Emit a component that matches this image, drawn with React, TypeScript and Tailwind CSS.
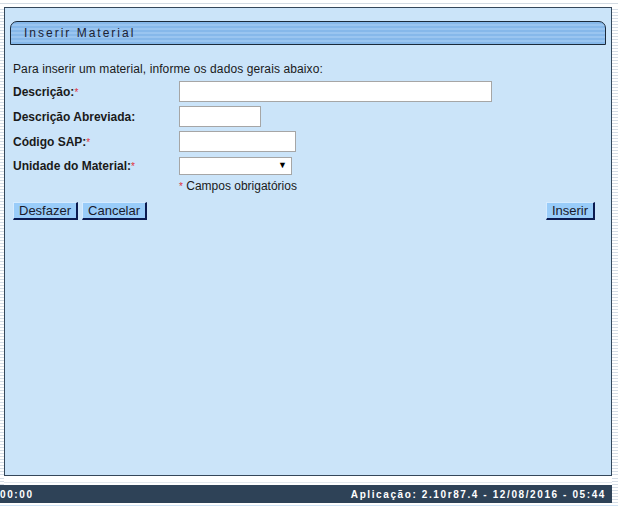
import React from 'react';

const stripes =
  'bg-[repeating-linear-gradient(180deg,#ffffff_0px,#ffffff_2px,#d5dde6_2px,#d5dde6_3px)]';

function Field({ label, required, children }: { label: string; required?: boolean; children: React.ReactNode }) {
  return (
    <div className="flex items-center">
      <div className="w-[166px] text-[12px] font-bold text-[#1a1a1a]">
        {label}
        {required && <span className="text-[10px] font-normal text-[#e0303a]">*</span>}
      </div>
      {children}
    </div>
  );
}

function Btn({ children }: { children: React.ReactNode }) {
  return (
    <button className="h-[18px] border border-t-[#d6ebff] border-l-[#d6ebff] border-r-2 border-b-2 border-r-[#0a1a50] border-b-[#0a1a50] bg-[#99ccf9] px-[5px] text-[13px] leading-[14px] text-[#1a1a2a]">
      {children}
    </button>
  );
}

export default function App() {
  return (
    <div className="flex h-[508px] w-[618px] flex-col bg-white font-['Liberation_Sans',Arial,sans-serif]">
      {/* top line */}
      <div className="h-[7px] pt-[3px]">
        <div className="h-px bg-[#d3dbe3]" />
      </div>

      <div className="flex h-[469px]">
        <div className={`w-[4px] ${stripes}`} />
        <div className="flex w-[608px] flex-col border border-[#34475a] bg-[#cbe4f9] px-[5px] pt-[13px]">
          {/* title bar */}
          <div className="flex h-[24px] items-center rounded-t-[7px] border border-[#1b2a3a] bg-[repeating-linear-gradient(180deg,#86b8ea_0px,#86b8ea_2px,#9ac5f0_2px,#9ac5f0_4px)] pl-[13px]">
            <span className="text-[12px] tracking-[2px] text-[#1c2233]">Inserir Material</span>
          </div>

          <div className="flex flex-col pl-[3px] pr-[11px]">
            <p className="mt-[17px] text-[12px] leading-[14px] tracking-[0.1px] text-[#1a1a1a]">
              Para inserir um material, informe os dados gerais abaixo:
            </p>

            <div className="mt-[5px] flex flex-col gap-[4px]">
              <Field label="Descrição:" required>
                <div className="h-[21px] w-[313px] border border-[#a6a6a6] bg-white" />
              </Field>
              <Field label="Descrição Abreviada:">
                <div className="h-[21px] w-[82px] border border-[#a6a6a6] bg-white" />
              </Field>
              <Field label="Código SAP:" required>
                <div className="h-[21px] w-[117px] border border-[#a6a6a6] bg-white" />
              </Field>
              <div className="mt-px">
                <Field label="Unidade do Material:" required>
                  <div className="flex h-[18px] w-[113px] items-center justify-end border border-[#a6a6a6] bg-white pr-[4px] text-[9px] text-black">
                    ▼
                  </div>
                </Field>
              </div>
            </div>

            <div className="mt-[4px] pl-[166px] text-[12px] leading-[14px] text-[#1a1a1a]">
              <span className="text-[10px] text-[#e0303a]">*</span> Campos obrigatórios
            </div>

            <div className="mt-[8px] flex items-center justify-between">
              <div className="flex gap-[4px]">
                <Btn>Desfazer</Btn>
                <Btn>Cancelar</Btn>
              </div>
              <Btn>Inserir</Btn>
            </div>
          </div>
        </div>
        <div className={`w-[6px] ${stripes}`} />
      </div>

      <div className="flex h-[9px]">
        <div className={`w-[4px] ${stripes}`} />
        <div className="flex w-[608px] flex-col justify-end pb-[2px]">
          <div className="h-px bg-[#e3e8ee]" />
        </div>
        <div className={`w-[6px] ${stripes}`} />
      </div>

      <div className="flex h-[18px]">
        <div className="flex w-[612px] items-center justify-between bg-[#2e4257] pr-[6px] text-[10px] font-bold tracking-[1.6px] text-white">
          <span>00:00</span>
          <span>Aplicação: 2.10r87.4 - 12/08/2016 - 05:44</span>
        </div>
        <div className={`w-[6px] ${stripes}`} />
      </div>

      <div className="pt-[2px]">
        <div className="h-px bg-[#cfe3f5]" />
      </div>
    </div>
  );
}
